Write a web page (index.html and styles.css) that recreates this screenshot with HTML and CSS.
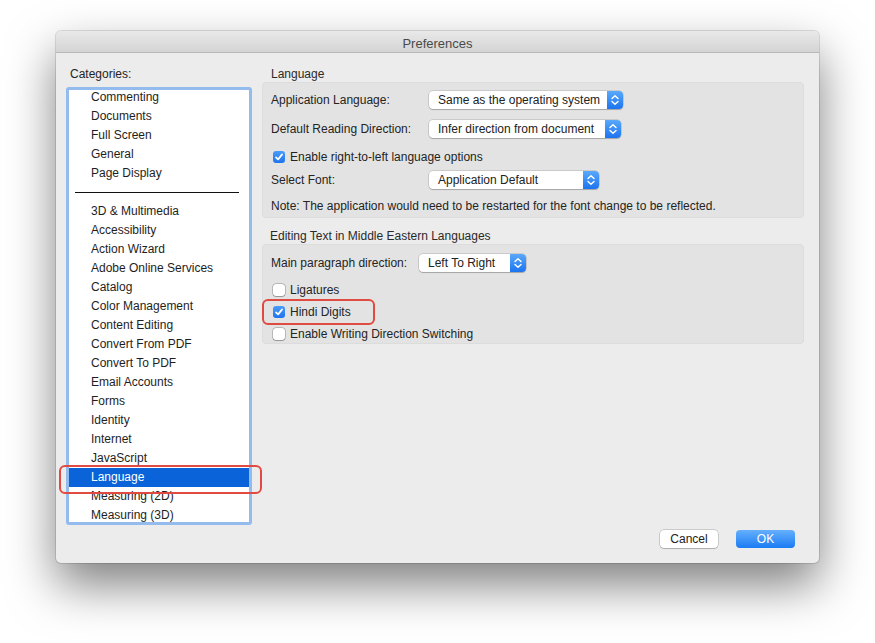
FILE: index.html
```html
<!DOCTYPE html>
<html>
<head>
<meta charset="utf-8">
<link rel="stylesheet" href="styles.css">
</head>
<body>
<div class="window">
  <div class="titlebar">Preferences</div>
  <div class="body">
    <div class="main">
      <div class="left">
        <div class="cat-label">Categories:</div>
        <div class="listbox">
          <ul class="list">
            <li>Commenting</li>
            <li>Documents</li>
            <li>Full Screen</li>
            <li>General</li>
            <li>Page Display</li>
            <li class="sep"><span></span></li>
            <li>3D &amp; Multimedia</li>
            <li>Accessibility</li>
            <li>Action Wizard</li>
            <li>Adobe Online Services</li>
            <li>Catalog</li>
            <li>Color Management</li>
            <li>Content Editing</li>
            <li>Convert From PDF</li>
            <li>Convert To PDF</li>
            <li>Email Accounts</li>
            <li>Forms</li>
            <li>Identity</li>
            <li>Internet</li>
            <li>JavaScript</li>
            <li class="selected">Language</li>
            <li>Measuring (2D)</li>
            <li>Measuring (3D)</li>
          </ul>
        </div>
        <div class="mark mark-lang"></div>
      </div>
      <div class="right">
        <div class="sec-title">Language</div>
        <div class="group g1">
          <div class="row r1">
            <span class="lbl">Application Language:</span>
            <div class="select w194"><span class="sel-text">Same as the operating system</span><span class="stepper"><svg width="16" height="18" viewBox="0 0 16 18"><path d="M5 7.5 L8 4.7 L11 7.5 M5 10.5 L8 13.3 L11 10.5" fill="none" stroke="#fff" stroke-width="1.4" stroke-linecap="round" stroke-linejoin="round"/></svg></span></div>
          </div>
          <div class="row r2">
            <span class="lbl">Default Reading Direction:</span>
            <div class="select w192"><span class="sel-text">Infer direction from document</span><span class="stepper"><svg width="16" height="18" viewBox="0 0 16 18"><path d="M5 7.5 L8 4.7 L11 7.5 M5 10.5 L8 13.3 L11 10.5" fill="none" stroke="#fff" stroke-width="1.4" stroke-linecap="round" stroke-linejoin="round"/></svg></span></div>
          </div>
          <div class="row r3">
            <span class="cb checked"><svg width="12" height="12" viewBox="0 0 12 12"><path d="M3 6.3 L5.1 8.4 L9.1 3.4" fill="none" stroke="#fff" stroke-width="1.7" stroke-linecap="round" stroke-linejoin="round"/></svg></span>
            <span class="cb-text">Enable right-to-left language options</span>
          </div>
          <div class="row r4">
            <span class="lbl">Select Font:</span>
            <div class="select w170"><span class="sel-text">Application Default</span><span class="stepper"><svg width="16" height="18" viewBox="0 0 16 18"><path d="M5 7.5 L8 4.7 L11 7.5 M5 10.5 L8 13.3 L11 10.5" fill="none" stroke="#fff" stroke-width="1.4" stroke-linecap="round" stroke-linejoin="round"/></svg></span></div>
          </div>
          <div class="row r5">
            <span class="note">Note: The application would need to be restarted for the font change to be reflected.</span>
          </div>
        </div>
        <div class="sec-title t2">Editing Text in Middle Eastern Languages</div>
        <div class="group g2">
          <div class="row m1">
            <span class="lbl lbl2">Main paragraph direction:</span>
            <div class="select w107"><span class="sel-text">Left To Right</span><span class="stepper"><svg width="16" height="18" viewBox="0 0 16 18"><path d="M5 7.5 L8 4.7 L11 7.5 M5 10.5 L8 13.3 L11 10.5" fill="none" stroke="#fff" stroke-width="1.4" stroke-linecap="round" stroke-linejoin="round"/></svg></span></div>
          </div>
          <div class="row c1">
            <span class="cb"></span>
            <span class="cb-text">Ligatures</span>
          </div>
          <div class="row c2">
            <span class="cb checked"><svg width="12" height="12" viewBox="0 0 12 12"><path d="M3 6.3 L5.1 8.4 L9.1 3.4" fill="none" stroke="#fff" stroke-width="1.7" stroke-linecap="round" stroke-linejoin="round"/></svg></span>
            <span class="cb-text">Hindi Digits</span>
            <div class="mark mark-hindi"></div>
          </div>
          <div class="row c3">
            <span class="cb"></span>
            <span class="cb-text">Enable Writing Direction Switching</span>
          </div>
        </div>
      </div>
    </div>
    <div class="footer">
      <button class="btn cancel">Cancel</button>
      <button class="btn ok">OK</button>
    </div>
  </div>
</div>
</body>
</html>
```

FILE: styles.css
```css
* { box-sizing: border-box; }
html, body { margin: 0; padding: 0; background: #ffffff; }
body {
  font-family: "Liberation Sans", Arial, sans-serif;
  font-size: 12px;
  color: #242424;
  width: 875px;
  height: 643px;
  overflow: hidden;
}
.window {
  margin: 31px 0 0 56px;
  width: 763px;
  height: 532px;
  background: #ececec;
  border-radius: 5px;
  box-shadow: 0 22px 48px rgba(0,0,0,0.5), 0 0 0 1px rgba(0,0,0,0.12);
  display: flex;
  flex-direction: column;
}
.titlebar {
  height: 22px;
  flex: none;
  background: linear-gradient(#e9e9e9, #d4d4d4);
  border-bottom: 1px solid #b8b8b8;
  border-radius: 5px 5px 0 0;
  text-align: center;
  padding-top: 3px;
  line-height: 19px;
  font-size: 13px;
  color: #4a4a4a;
}
.body {
  flex: 1;
  display: flex;
  flex-direction: column;
  padding: 14px 15px 15px 10px;
}
.main {
  display: flex;
  gap: 10px;
}
.left {
  width: 186px;
  flex: none;
  position: relative;
}
.cat-label {
  height: 14px;
  line-height: 14px;
  padding-left: 4px;
  margin-bottom: 6px;
}
.listbox {
  height: 438px;
  border: 3px solid #93bbee;
  border-radius: 3px;
  background: #fff;
  overflow: hidden;
}
.list {
  list-style: none;
  margin: -2px 0 0 0;
  padding: 0;
}
.list li {
  height: 19px;
  line-height: 19px;
  padding-left: 22px;
  color: #1e1e1e;
  white-space: nowrap;
}
.list li.sep {
  padding: 0 10px 0 6px;
  display: flex;
  align-items: center;
}
.list li.sep span {
  display: block;
  height: 1px;
  width: 100%;
  background: #111;
}
.list li.selected {
  background: #0b63d9;
  color: #fff;
}
.mark {
  position: absolute;
  border: 2.5px solid #e04a40;
  border-radius: 6px;
  pointer-events: none;
}
.mark-lang {
  left: -7px;
  top: 398px;
  width: 203px;
  height: 29px;
}
.right {
  flex: 1;
}
.sec-title {
  height: 14px;
  line-height: 14px;
  padding-left: 9px;
  margin-bottom: 1px;
  color: #2a2a2a;
}
.sec-title.t2 {
  margin-top: 11px;
  padding-left: 8px;
}
.group {
  background: #e3e3e3;
  border: 1px solid #dcdcdc;
  border-radius: 4px;
  padding-left: 8px;
}
.g1 { height: 136px; padding-top: 8px; }
.g2 { height: 100px; padding-top: 9px; }
.row {
  display: flex;
  align-items: center;
  height: 18px;
  position: relative;
}
.r2 { margin-top: 11px; }
.r3 { margin-top: 10px; padding-left: 2px; }
.r4 { margin-top: 5px; }
.r5 { margin-top: 8px; }
.c1 { margin-top: 10px; height: 16px; padding-left: 2px; }
.c2 { margin-top: 6px; height: 16px; padding-left: 2px; }
.c3 { margin-top: 6px; height: 16px; padding-left: 2px; }
.lbl { width: 158px; flex: none; }
.lbl2 { width: 148px; }
.select {
  height: 18px;
  display: flex;
  align-items: center;
  justify-content: space-between;
  background: #fff;
  border-radius: 4px;
  box-shadow: 0 0 0 0.5px rgba(0,0,0,0.22), 0 1px 1px rgba(0,0,0,0.18);
  overflow: hidden;
}
.w194 { width: 194px; }
.w192 { width: 192px; }
.w170 { width: 170px; }
.w107 { width: 107px; }
.sel-text {
  padding-left: 9px;
  white-space: nowrap;
  color: #222;
}
.stepper {
  width: 16px;
  height: 18px;
  flex: none;
  background: linear-gradient(#5aa9fc, #1c74ef);
  display: flex;
}
.cb {
  width: 12px;
  height: 12px;
  flex: none;
  border-radius: 3px;
  background: #fff;
  box-shadow: 0 0 0 0.5px rgba(0,0,0,0.35), 0 0.5px 1px rgba(0,0,0,0.2);
  display: flex;
}
.cb.checked {
  background: linear-gradient(#4b9bfb, #1f73ee);
  box-shadow: none;
}
.cb-text { margin-left: 5px; white-space: nowrap; }
.note { white-space: nowrap; }
.mark-hindi {
  left: -9px;
  top: -5px;
  width: 113px;
  height: 26px;
}
.footer {
  margin-top: auto;
  padding-right: 9px;
  display: flex;
  justify-content: flex-end;
  gap: 18px;
}
.btn {
  height: 18px;
  width: 58px;
  font-family: "Liberation Sans", Arial, sans-serif;
  font-size: 12px;
  border: none;
  border-radius: 4px;
  padding: 0;
  line-height: 18px;
}
.cancel {
  background: #fff;
  color: #222;
  box-shadow: 0 0 0 0.5px rgba(0,0,0,0.28), 0 1px 1px rgba(0,0,0,0.15);
}
.ok {
  width: 59px;
  background: linear-gradient(#65b0fd, #1b7bf4);
  color: #fff;
}
```
